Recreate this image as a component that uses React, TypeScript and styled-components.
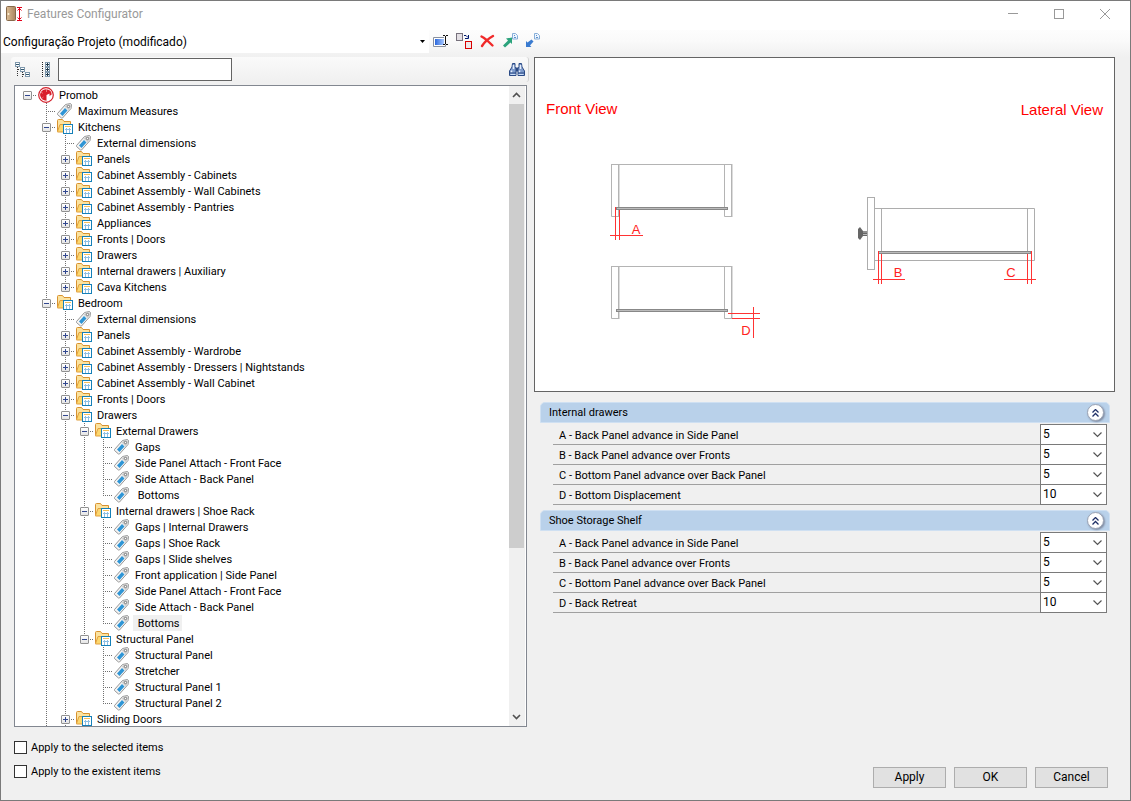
import React, { useState } from "react";
import styled, { createGlobalStyle } from "styled-components";

const GlobalStyle = createGlobalStyle`
  *, *::before, *::after { box-sizing: border-box; }
  body {
    margin: 0;
    background: #f0f0f0;
    color: #000;
    font-family: Roboto, "Liberation Sans", sans-serif;
    font-size: 11px;
  }
  button, input, select { font: inherit; color: inherit; margin: 0; }
`;

const Window = styled.div`
  display: flex;
  flex-direction: column;
  height: 100vh;
  min-height: 480px;
  border: 1px solid #7a7a7a;
  background: #f0f0f0;
`;

const TitleBar = styled.header`
  display: flex;
  align-items: center;
  height: 29px;
  padding: 0 2px 4px 4px;
  background: #fff;
`;

const Title = styled.h1`
  flex: 1;
  margin: 0 0 0 4px;
  color: #999;
  font-size: 12px;
  font-weight: 400;
  line-height: 16px;
`;

const CaptionButton = styled.button`
  display: grid;
  place-items: center;
  width: 46px;
  height: 24px;
  padding: 0;
  border: 0;
  background: none;
`;

const CaptionGroup = styled.div`
  display: flex;
`;

const ProjectBar = styled.div`
  display: flex;
  align-items: flex-start;
  height: 27px;
  background: linear-gradient(#fdfdfd, #fafafa 40%, #f0f0f0);
`;

const ProjectField = styled.div`
  position: relative;
  width: 428px;
`;

const ProjectSelect = styled.select`
  appearance: none;
  display: block;
  width: 100%;
  height: 23px;
  padding: 0 20px 0 2px;
  border: 0;
  background: #fff;
  font-size: 12px;
`;

const ProjectCaret = styled.svg`
  position: absolute;
  right: 4px;
  top: 10px;
  pointer-events: none;
`;

const ToolGroup = styled.div`
  display: flex;
  padding-top: 1px;
`;

const ToolButton = styled.button`
  display: grid;
  place-items: center;
  width: 23px;
  height: 20px;
  padding: 0;
  border: 0;
  background: none;
`;

const Main = styled.main`
  display: flex;
  flex: 1;
  min-height: 0;
`;

const TreeColumn = styled.section`
  display: flex;
  flex-direction: column;
  width: 518px;
  margin-left: 10px;
`;

const TreeToolbar = styled.div`
  display: flex;
  align-items: center;
  height: 25px;
  margin-bottom: 3px;
  border-right: 1px solid #d2d2d2;
  border-radius: 3px;
  background: linear-gradient(#fafafa, #f0f0f0);
`;

const SearchInput = styled.input`
  width: 174px;
  height: 23px;
  margin-left: 1px;
  padding: 0 4px;
  border: 1px solid #646464;
  border-radius: 0;
  background: #fff;
`;

const Spacer = styled.div`
  flex: 1;
`;

const TreeFrame = styled.div`
  display: flex;
  flex: 1;
  min-height: 0;
  margin: 0 2px 0 3px;
  padding-right: 1px;
  border: 1px solid #828790;
  background: #fff;
`;

const TreeList = styled.ul`
  flex: 1;
  margin: 0;
  padding: 1px 0 0 3px;
  overflow: hidden;
  list-style: none;
`;

const TreeRow = styled.li`
  display: flex;
  height: 16px;
`;

const Guide = styled.span<{ $line?: "full" | "half" | "none"; $branch?: boolean }>`
  display: grid;
  width: 19px;
  height: 16px;

  &::before {
    content: "";
    grid-area: 1 / 1;
    display: ${(p) => (!p.$line || p.$line === "none" ? "none" : "block")};
    width: 1px;
    height: ${(p) => (p.$line === "half" ? "9px" : "16px")};
    margin-left: 9px;
    background: linear-gradient(#707070 50%, transparent 50%) 0 0 / 1px 2px;
  }

  &::after {
    content: "";
    grid-area: 1 / 1;
    display: ${(p) => (p.$branch ? "block" : "none")};
    height: 1px;
    margin: 8px 0 0 9px;
    background: linear-gradient(90deg, #707070 50%, transparent 50%) 0 0 / 2px 1px;
  }
`;

const Expander = styled.button`
  z-index: 1;
  grid-area: 1 / 1;
  display: grid;
  place-items: center;
  width: 9px;
  height: 9px;
  margin: 4px 0 0 5px;
  padding: 0;
  border: 1px solid #919191;
  border-radius: 1px;
  background: linear-gradient(#fff, #e4e4e4);
`;

const TreeIcon = styled.span`
  width: 20px;
  height: 16px;
`;

const TreeLabel = styled.span<{ $selected?: boolean }>`
  padding: 0 2px;
  background: ${(p) => (p.$selected ? "#f0f0f0" : "transparent")};
  line-height: 18px;
  white-space: pre;
`;

const Scrollbar = styled.div`
  display: flex;
  flex-direction: column;
  width: 16px;
  background: #f0f0f0;
`;

const ScrollButton = styled.button`
  display: grid;
  place-items: center;
  width: 15px;
  height: 18px;
  padding: 0;
  border: 0;
  background: #f0f0f0;
`;

const ScrollThumb = styled.div`
  flex: 444;
  width: 15px;
  background: #cdcdcd;
`;

const ScrollRest = styled.div`
  flex: 160;
`;

const DetailColumn = styled.section`
  display: flex;
  flex: 1;
  flex-direction: column;
  min-width: 0;
  margin: 0 15px 0 5px;
`;

const DiagramFrame = styled.figure`
  margin: 0 0 10px;
  border: 1px solid #646464;
  background: #fff;
`;

const Diagram = styled.svg`
  display: block;
  width: 100%;
  height: 333px;
  font-family: "Liberation Sans", Arial, sans-serif;
`;

const Section = styled.section`
  margin: 0 5px 5px 6px;
`;

const SectionHeader = styled.div`
  display: flex;
  align-items: center;
  height: 21px;
  padding: 0 5px 0 8px;
  border: 1px solid #cfe0f2;
  border-radius: 5px 5px 0 0;
  background: #b9d1ea;
`;

const SectionTitle = styled.h2`
  flex: 1;
  margin: 0;
  font-size: 11px;
  font-weight: 400;
  line-height: 16px;
`;

const CollapseButton = styled.button`
  display: grid;
  place-items: center;
  width: 17px;
  height: 17px;
  padding: 0;
  border: 1px solid #9aa3b4;
  border-radius: 50%;
  background: #fff;
  box-shadow: 1px 1px 2px #7e8aa0;
`;

const FieldList = styled.div`
  margin: 2px 3px 0 13px;
`;

const Field = styled.div`
  display: flex;
  height: 20px;
  border-bottom: 1px solid #a0a0a0;
`;

const FieldLabel = styled.label`
  flex: 1;
  padding-left: 6px;
  line-height: 22px;
`;

const FieldControl = styled.div`
  position: relative;
  width: 67px;
  height: 21px;
  margin-top: -1px;
`;

const FieldSelect = styled.select`
  appearance: none;
  display: block;
  width: 100%;
  height: 21px;
  padding: 0 16px 1px 2px;
  border: 1px solid #7a7a7a;
  border-radius: 0;
  background: #fff;
  font-size: 12px;
`;

const FieldChevron = styled.svg`
  position: absolute;
  right: 5px;
  top: 8px;
  pointer-events: none;
`;

const Footer = styled.footer`
  display: flex;
  align-items: flex-end;
  justify-content: space-between;
  height: 73px;
  padding: 0 22px 12px 13px;
`;

const CheckGroup = styled.div`
  display: flex;
  flex-direction: column;
  gap: 6px;
  margin-bottom: 8px;
`;

const CheckLabel = styled.label`
  display: flex;
  align-items: center;
  gap: 4px;
  line-height: 16px;
`;

const CheckText = styled.span`
  padding-top: 2px;
`;

const Checkbox = styled.input`
  appearance: none;
  width: 13px;
  height: 13px;
  border: 1px solid #333;
  background: #fff;

  &:checked { background: #333; box-shadow: inset 0 0 0 2px #fff; }
`;

const ButtonGroup = styled.div`
  display: flex;
  gap: 8px;
`;

const DialogButton = styled.button`
  width: 73px;
  height: 21px;
  padding: 0 0 1px;
  border: 1px solid #adadad;
  background: #e1e1e1;
  font-size: 12px;
`;

const AppIcon = () => (
  <svg width="18" height="16" viewBox="0 0 18 16">
    <defs>
      <linearGradient id="wood" x1="0" x2="1">
        <stop offset="0" stopColor="#dcbc93" />
        <stop offset="1" stopColor="#a9865f" />
      </linearGradient>
    </defs>
    <rect x="1.5" y=".5" width="9" height="14" rx="1" fill="url(#wood)" stroke="#87694a" />
    <circle cx="3.5" cy="8" r="1" fill="#fff3d8" />
    <path d="M12 1.500h5M12 14.500h5" stroke="#e3001b" />
    <path d="M14.500 2v12M12.500 4.500l2-2 2 2M12.500 11.500l2 2 2-2" fill="none" stroke="#e3001b" />
  </svg>
);

const FolderIcon = () => (
  <svg width="18" height="16" viewBox="0 0 18 16">
    <path d="M1.500 12.500V1.500q0-1 1-1h4l1.500 2h6.500v3" fill="#fbe3a0" stroke="#d8922f" />
    <path d="M1.500 12.500 4 5.500h11l-2.500 7.500h-11z" fill="#fdd86f" stroke="#e0a040" />
    <rect x="7.500" y="5.500" width="9" height="9" fill="#fff" stroke="#1580b8" />
    <path d="M9 7.500h6" stroke="#f5c15a" />
    <path d="M9 10.500h6M10.500 9v5M13.500 9v5" stroke="#8dbfe4" />
  </svg>
);

const TagIcon = () => (
  <svg width="18" height="16" viewBox="0 0 18 16">
    <path d="M1.500 10.500 9.500 1.500 14.500.500l1 1-.5 4-8.500 9.500h-1l-4-3.500z" fill="#f4f4f4" stroke="#969696" />
    <path d="m10 2 4.500-1 .5.500-.5 4-2 2-4-4z" fill="#d3d3d3" />
    <path d="m4 10.500 5-5.500 2.500 2.500-5 5.500z" fill="#2f95d5" />
    <circle cx="12.500" cy="3.500" r="1.200" fill="#fff" stroke="#777" />
  </svg>
);

const PromobIcon = () => (
  <svg width="18" height="16" viewBox="0 0 18 16">
    <circle cx="9" cy="8" r="7.300" fill="#fff" stroke="#d3202b" strokeWidth="1.200" />
    <path d="M9 2.300q5.500.5 5.700 5.200l-2.200 1.500V6.500L9.500 8v5.700Q4 13.500 3 8 3.500 3 9 2.300z" fill="#d91f2b" />
    <path d="M9.500 2v3M4 5l2 1.500M4.500 11.500l2-1.500" stroke="#f7a6aa" strokeWidth=".6" />
  </svg>
);

const CollapseAllIcon = () => (
  <svg width="16" height="16" viewBox="0 0 16 16">
    <path d="M2.500 5v10M7.500 10v6" stroke="#333" strokeDasharray="1 1" />
    <g fill="#fff" stroke="#7f98ac">
      <rect x=".5" y=".5" width="4" height="4" />
      <rect x="5.500" y="5.500" width="4" height="4" />
      <rect x="10.500" y="10.500" width="4" height="4" />
    </g>
    <path d="M1 2.500h3M6 7.500h3M11 12.500h3" stroke="#31566e" />
    <path d="M3 7.500h2M8 12.500h2" stroke="#333" strokeDasharray="1 1" />
  </svg>
);

const ExpandAllIcon = () => (
  <svg width="10" height="16" viewBox="0 0 10 16">
    <path d="M1.500 0v16" stroke="#222" strokeDasharray="1 1" />
    {[0, 5, 10].map((y) => (
      <g key={y}>
        <rect x="4.500" y={y + 0.5} width="4" height="4" fill="#fff" stroke="#7f98ac" />
        <path d={`M5 ${y + 2.5}h3M6.500 ${y + 1}v3`} stroke="#1b3548" />
      </g>
    ))}
  </svg>
);

const BinocularsIcon = () => (
  <svg width="16" height="14" viewBox="0 0 16 14">
    <path d="M3.500.500h2.500v3l1 2.500v6.500h-6.500V8l2.500-4zM10 .500h2.500l.5 3.500 2.500 4v4.500h-6.500V6l1-2.500z" fill="#7e9bcc" stroke="#2b4a85" />
    <path d="M7 4.500h2v4H7z" fill="#2b4a85" />
    <path d="M2.500 7.500v2M10.500 7.500v2M4.500 2v4M11.500 2v4" stroke="#e6effc" strokeWidth="1.500" />
    <path d="M1 10h6M9 10h6" stroke="#2b4a85" />
    <path d="M1.500 11.500h5M9.500 11.500h5" stroke="#c9dcf6" />
  </svg>
);

const RenameIcon = () => (
  <svg width="16" height="14" viewBox="0 0 16 14">
    <defs>
      <linearGradient id="field" x1="0" x2="1">
        <stop offset="0" stopColor="#2a67dc" />
        <stop offset="1" stopColor="#a9c9ff" />
      </linearGradient>
    </defs>
    <path d="M11 3.500H.5v9H12.500v-2" fill="#fff" stroke="#8790a0" />
    <rect x="2" y="5" width="9" height="6" fill="url(#field)" />
    <path d="M10 1.500h2M13 1.500h2M10 10.500h2M13 10.500h2M12.500 2v8" stroke="#111" />
  </svg>
);

const CopyIcon = () => (
  <svg width="16" height="16" viewBox="0 0 16 16">
    <rect x=".5" y=".5" width="6" height="7" fill="#e3dfe4" stroke="#77717c" />
    <rect x="9.500" y="8.500" width="6" height="7" fill="#eee7e8" stroke="#d80000" />
    <path d="M8 2.500h2l2 2M12.500 2v3.500H9" fill="none" stroke="#001a70" />
  </svg>
);

const DeleteIcon = () => (
  <svg width="16" height="14" viewBox="0 0 16 14">
    <path d="M2.500 2.500c3 1.500 7 5 11 9M14 2C9.500 4.500 5.500 8 3 12" fill="none" stroke="#f02a2a" strokeWidth="2.400" strokeLinecap="round" />
  </svg>
);

const TransferIcon = ({ color, flip }: { color: string; flip?: boolean }) => (
  <svg width="16" height="16" viewBox="0 0 16 16">
    <path
      d={flip ? "M1 14v-6l1.500 1.500 4-3 2 2-3.500 4L6.500 14z" : "M10 4.500v6.500L8.500 9.500 3 14.500l-2-2L6 7.500 4 5.500z"}
      fill={color}
    />
    <g transform={flip ? "translate(-1 0)" : undefined}>
      <path d="M10.500.500h3l2 2v3.500h-5z" fill="#eef5ff" stroke="#86aed8" />
      <path d="M12 2.500h1M12 4.500h2" stroke="#5d93cd" />
    </g>
  </svg>
);

type Kind = "root" | "folder" | "tag";
type Line = "full" | "half" | "none";

interface Node {
  label: string;
  kind?: Kind;
  children?: Node[];
  selected?: boolean;
  hasMore?: boolean;
}

const tag = (label: string, selected = false): Node => ({ label, kind: "tag", selected });
const folder = (label: string, children?: Node[]): Node => ({ label, kind: "folder", children });

const tree: Node = {
  label: "Promob",
  kind: "root",
  children: [
    tag("Maximum Measures"),
    folder("Kitchens", [
      tag("External dimensions"),
      folder("Panels"),
      folder("Cabinet Assembly - Cabinets"),
      folder("Cabinet Assembly - Wall Cabinets"),
      folder("Cabinet Assembly - Pantries"),
      folder("Appliances"),
      folder("Fronts | Doors"),
      folder("Drawers"),
      folder("Internal drawers | Auxiliary"),
      folder("Cava Kitchens"),
    ]),
    {
      ...folder("Bedroom", [
        tag("External dimensions"),
        folder("Panels"),
        folder("Cabinet Assembly - Wardrobe"),
        folder("Cabinet Assembly - Dressers | Nightstands"),
        folder("Cabinet Assembly - Wall Cabinet"),
        folder("Fronts | Doors"),
        folder("Drawers", [
          folder("External Drawers", [
            tag("Gaps"),
            tag("Side Panel Attach - Front Face"),
            tag("Side Attach - Back Panel"),
            tag(" Bottoms"),
          ]),
          folder("Internal drawers | Shoe Rack", [
            tag("Gaps | Internal Drawers"),
            tag("Gaps | Shoe Rack"),
            tag("Gaps | Slide shelves"),
            tag("Front application | Side Panel"),
            tag("Side Panel Attach - Front Face"),
            tag("Side Attach - Back Panel"),
            tag(" Bottoms", true),
          ]),
          folder("Structural Panel", [
            tag("Structural Panel"),
            tag("Stretcher"),
            tag("Structural Panel 1"),
            tag("Structural Panel 2"),
          ]),
        ]),
        { ...folder("Sliding Doors"), hasMore: true },
      ]),
      hasMore: true,
    },
  ],
};

const icons: Record<Kind, React.FC> = { root: PromobIcon, folder: FolderIcon, tag: TagIcon };

const TreeBranch = ({ node, ancestors, line }: { node: Node; ancestors: Line[]; line: Line }) => {
  const [open, setOpen] = useState(Boolean(node.children));
  const kind = node.kind ?? "folder";
  const Icon = icons[kind];
  const children = node.children ?? [];
  const below: Line[] = [...ancestors, line === "full" ? "full" : "none"];
  return (
    <>
      <TreeRow role="treeitem" aria-level={ancestors.length + 1} aria-selected={Boolean(node.selected)}>
        {ancestors.map((a, i) => (
          <Guide key={i} $line={a} />
        ))}
        <Guide $line={line} $branch>
          {kind !== "tag" && (
            <Expander aria-label={`Toggle ${node.label}`} onClick={() => setOpen(!open)}>
              <svg width="5" height="5" viewBox="0 0 5 5">
                <path d={open ? "M0 2.5h5" : "M0 2.5h5M2.5 0v5"} stroke="#31478f" />
              </svg>
            </Expander>
          )}
        </Guide>
        <TreeIcon>
          <Icon />
        </TreeIcon>
        <TreeLabel $selected={node.selected}>{node.label}</TreeLabel>
      </TreeRow>
      {open &&
        children.map((child, i) => (
          <TreeBranch
            key={i}
            node={child}
            ancestors={below}
            line={i < children.length - 1 || child.hasMore ? "full" : "half"}
          />
        ))}
    </>
  );
};

const sections = [
  {
    id: "internal",
    title: "Internal drawers",
    fields: [
      ["A - Back Panel advance in Side Panel", "5"],
      ["B - Back Panel advance over Fronts", "5"],
      ["C - Bottom Panel advance over Back Panel", "5"],
      ["D - Bottom Displacement", "10"],
    ],
  },
  {
    id: "shoe",
    title: "Shoe Storage Shelf",
    fields: [
      ["A - Back Panel advance in Side Panel", "5"],
      ["B - Back Panel advance over Fronts", "5"],
      ["C - Bottom Panel advance over Back Panel", "5"],
      ["D - Back Retreat", "10"],
    ],
  },
];

const DrawerDiagram = () => (
  <Diagram viewBox="535 58 579 333" role="img" aria-label="Front and lateral drawer views">
    <g fill="#f00" fontSize="15">
      <text x="546" y="114">Front View</text>
      <text x="1103" y="115" textAnchor="end">Lateral View</text>
    </g>
    {[164, 266].map((y) => (
      <g key={y} fill="none">
        <path d={`M732.500 ${y}v52M619.500 ${y}v52`} stroke="#dcdcdc" />
        <path d={`M611 ${y + 0.5}h121M611.500 ${y}v52.500h8M618.500 ${y}v52M724.500 ${y}v52.500h8M731.500 ${y}v52`} stroke="#b4b4b4" />
        <rect x="616.500" y={y + 43.5} width="111" height="2" fill="#bbb" stroke="#888" />
      </g>
    ))}
    <g fill="none" stroke="#adadad">
      <rect x="867.500" y="197.500" width="7" height="72" />
      <path d="M874.500 208.500h160v52h-160M881.500 208.500v52M1027.500 208.500v52" />
    </g>
    <rect x="878.500" y="251.500" width="152" height="2" fill="#bbb" stroke="#888" />
    <path d="M858 229l2-2 3 4h4v5h-4l-3 4-2-2z" fill="#666" />
    <path d="M863 232h4M863 234.500h4" stroke="#bbb" />
    <path
      d="M615.500 207v33M619.500 210v30M610 235.500h33M728 313.500h32M732 318.500h28M753.500 307v31M878.500 251v33M881.500 254v30M873 279.500h32M1027.500 254v30M1031.500 251v33M1004 279.500h32"
      fill="none"
      stroke="#f33"
    />
    <g fill="#f22" fontSize="13" textAnchor="middle">
      <text x="636" y="234">A</text>
      <text x="746" y="335">D</text>
      <text x="898" y="277">B</text>
      <text x="1011" y="277">C</text>
    </g>
  </Diagram>
);

export default function App() {
  return (
    <>
      <GlobalStyle />
      <Window>
        <TitleBar>
          <AppIcon />
          <Title>Features Configurator</Title>
          <CaptionGroup>
            <CaptionButton aria-label="Minimize">
              <svg width="10" height="11"><path d="M0 5.500h10" stroke="#999" /></svg>
            </CaptionButton>
            <CaptionButton aria-label="Maximize">
              <svg width="10" height="10"><rect x=".5" y=".5" width="9" height="9" fill="none" stroke="#999" /></svg>
            </CaptionButton>
            <CaptionButton aria-label="Close">
              <svg width="10" height="10"><path d="M0 0l10 10M10 0l-10 10" stroke="#999" /></svg>
            </CaptionButton>
          </CaptionGroup>
        </TitleBar>

        <ProjectBar>
          <ProjectField>
            <ProjectSelect aria-label="Project configuration">
              <option>Configuração Projeto (modificado)</option>
            </ProjectSelect>
            <ProjectCaret width="5" height="3"><path d="M0 0h5L2.500 3z" /></ProjectCaret>
          </ProjectField>
          <ToolGroup>
            <ToolButton aria-label="Rename"><RenameIcon /></ToolButton>
            <ToolButton aria-label="Copy"><CopyIcon /></ToolButton>
            <ToolButton aria-label="Delete"><DeleteIcon /></ToolButton>
            <ToolButton aria-label="Export"><TransferIcon color="#2ba37c" /></ToolButton>
            <ToolButton aria-label="Import"><TransferIcon color="#3a7bd0" flip /></ToolButton>
          </ToolGroup>
        </ProjectBar>

        <Main>
          <TreeColumn>
            <TreeToolbar>
              <ToolButton aria-label="Collapse all"><CollapseAllIcon /></ToolButton>
              <ToolButton aria-label="Expand all"><ExpandAllIcon /></ToolButton>
              <SearchInput aria-label="Search" />
              <Spacer />
              <ToolButton aria-label="Find"><BinocularsIcon /></ToolButton>
            </TreeToolbar>
            <TreeFrame>
              <TreeList role="tree">
                <TreeBranch node={tree} ancestors={[]} line="none" />
              </TreeList>
              <Scrollbar>
                <ScrollButton aria-label="Scroll up">
                  <svg width="9" height="6"><path d="M1 5l3.500-3.500L8 5" fill="none" stroke="#505050" strokeWidth="1.600" /></svg>
                </ScrollButton>
                <ScrollThumb />
                <ScrollRest />
                <ScrollButton aria-label="Scroll down">
                  <svg width="9" height="6"><path d="M1 1l3.500 3.500L8 1" fill="none" stroke="#505050" strokeWidth="1.600" /></svg>
                </ScrollButton>
              </Scrollbar>
            </TreeFrame>
          </TreeColumn>

          <DetailColumn>
            <DiagramFrame>
              <DrawerDiagram />
            </DiagramFrame>
            {sections.map((section) => (
              <Section key={section.id}>
                <SectionHeader>
                  <SectionTitle>{section.title}</SectionTitle>
                  <CollapseButton aria-label={`Collapse ${section.title}`}>
                    <svg width="7" height="8"><path d="M.5 3.500l3-3 3 3M.5 7.500l3-3 3 3" fill="none" stroke="#1f2f66" strokeWidth="1.300" /></svg>
                  </CollapseButton>
                </SectionHeader>
                <FieldList>
                  {section.fields.map(([label, value], i) => (
                    <Field key={label}>
                      <FieldLabel htmlFor={`${section.id}-${i}`}>{label}</FieldLabel>
                      <FieldControl>
                        <FieldSelect id={`${section.id}-${i}`} defaultValue={value}>
                          <option>{value}</option>
                        </FieldSelect>
                        <FieldChevron width="9" height="6"><path d="M.5.500l4 4 4-4" fill="none" stroke="#555" strokeWidth="1.200" /></FieldChevron>
                      </FieldControl>
                    </Field>
                  ))}
                </FieldList>
              </Section>
            ))}
          </DetailColumn>
        </Main>

        <Footer>
          <CheckGroup>
            <CheckLabel><Checkbox type="checkbox" /><CheckText>Apply to the selected items</CheckText></CheckLabel>
            <CheckLabel><Checkbox type="checkbox" /><CheckText>Apply to the existent items</CheckText></CheckLabel>
          </CheckGroup>
          <ButtonGroup>
            <DialogButton>Apply</DialogButton>
            <DialogButton>OK</DialogButton>
            <DialogButton>Cancel</DialogButton>
          </ButtonGroup>
        </Footer>
      </Window>
    </>
  );
}
